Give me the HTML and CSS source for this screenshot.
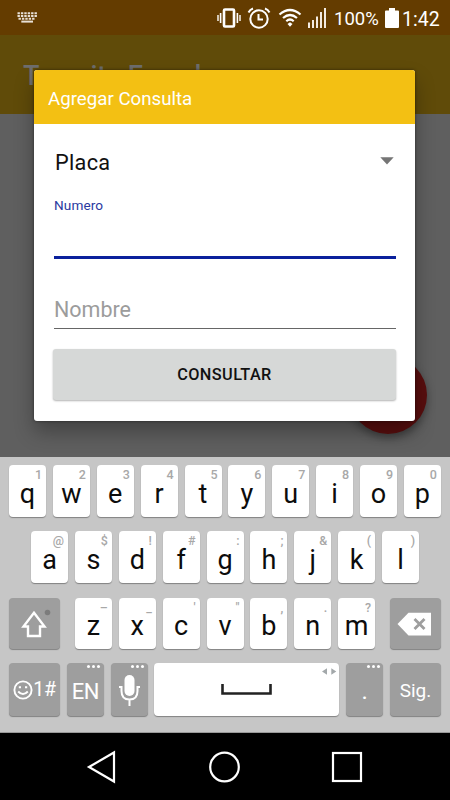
FILE: index.html
```
<!DOCTYPE html>
<html lang="es">
<head>
    <meta charset="UTF-8">
    <meta name="viewport" content="width=device-width, initial-scale=1.0">
    <title>Agregar Consulta</title>
    <link rel="stylesheet" href="styles.css">
</head>
<body>
    <div class="estado">
        <svg class="ico-teclado" width="20" height="12" viewBox="0 0 20 12">
            <path d="M0.5 1.2H20M0.5 4H20" stroke="#e8e0d6" stroke-width="2" stroke-dasharray="2.4 1"/>
            <path d="M1.5 6.8H18.5" stroke="#e8e0d6" stroke-width="2" stroke-dasharray="2.4 1"/>
            <path d="M4.3 9.6H16" stroke="#e8e0d6" stroke-width="2"/>
        </svg>
        <svg class="ico-vibrar" width="24" height="22" viewBox="0 0 24 22" fill="none" stroke="#fff">
            <rect x="7" y="2.5" width="10" height="17" rx="1" stroke-width="2.6"/>
            <path d="M3.6 6V16M20.4 6V16" stroke-width="1.6"/>
            <path d="M1 8V14M23 8V14" stroke-width="1.4"/>
        </svg>
        <svg class="ico-alarma" width="24" height="22" viewBox="0 0 24 22" fill="none" stroke="#fff" stroke-width="2">
            <circle cx="12" cy="12" r="8.7"/>
            <path d="M11.5 7V12.5H16"/>
            <path d="M1.5 5.5Q3 2.5 6 1.5M22.5 5.5Q21 2.5 18 1.5"/>
        </svg>
        <svg class="ico-wifi" width="24" height="20" viewBox="0 0 24 20" fill="none" stroke="#fff" stroke-width="2.2">
            <path d="M1.5 6.5Q12 -2.5 22.5 6.5M5 10Q12 4 19 10M8.3 13.2Q12 9.8 15.7 13.2"/>
            <path d="M12 14.2L14.5 16L12 18.8L9.5 16Z" fill="#fff" stroke="none"/>
        </svg>
        <svg class="ico-senal" width="19" height="20" viewBox="0 0 19 20" stroke="#f3ebe2" stroke-width="2">
            <path d="M1 14.5V20M5 12V20M9 8.5V20M13 4V20M17 0V20"/>
        </svg>
        <span class="porcentaje">100%</span>
        <svg class="ico-bateria" width="14" height="20" viewBox="0 0 14 20" fill="#fff">
            <path d="M4 0H10V2.5H13Q14 2.5 14 3.5V19Q14 20 13 20H1Q0 20 0 19V3.5Q0 2.5 1 2.5H4Z"/>
        </svg>
        <span class="hora">1:42</span>
    </div>

    <div class="pantalla">
        <div class="barra">Transito Ecuador</div>
        <div class="flotante"></div>

        <div class="dialogo">
            <div class="dialogo-titulo">Agregar Consulta</div>
            <div class="dialogo-cuerpo">
                <div class="selector">
                    <span>Placa</span>
                    <svg width="14" height="8" viewBox="0 0 14 8"><path d="M0.3 0.3H13.7L7 7.5Z" fill="#757575"/></svg>
                </div>
                <div class="campo activo"><span>Numero</span></div>
                <div class="campo vacio"><span>Nombre</span></div>
                <div class="boton">CONSULTAR</div>
            </div>
        </div>
    </div>

    <div class="teclado">
        <div class="fila">
            <div class="tecla">q<small>1</small></div>
            <div class="tecla">w<small>2</small></div>
            <div class="tecla">e<small>3</small></div>
            <div class="tecla">r<small>4</small></div>
            <div class="tecla">t<small>5</small></div>
            <div class="tecla">y<small>6</small></div>
            <div class="tecla">u<small>7</small></div>
            <div class="tecla">i<small>8</small></div>
            <div class="tecla">o<small>9</small></div>
            <div class="tecla">p<small>0</small></div>
        </div>
        <div class="fila fila-media">
            <div class="tecla">a<small>@</small></div>
            <div class="tecla">s<small>$</small></div>
            <div class="tecla">d<small>!</small></div>
            <div class="tecla">f<small>#</small></div>
            <div class="tecla">g<small>:</small></div>
            <div class="tecla">h<small>;</small></div>
            <div class="tecla">j<small>&amp;</small></div>
            <div class="tecla">k<small>(</small></div>
            <div class="tecla">l<small>)</small></div>
        </div>
        <div class="fila fila-tres">
            <div class="tecla gris ancha mayus">
                <svg width="51" height="52" viewBox="0 0 51 52">
                    <path d="M25 14.8L35.5 28.5H31V38H19V28.5H14.5Z" fill="none" stroke="#fff" stroke-width="2.4"/>
                    <circle cx="38.5" cy="14.5" r="2.8" fill="#7c7c7c"/>
                </svg>
            </div>
            <div class="tecla">z<small>–</small></div>
            <div class="tecla">x<small>_</small></div>
            <div class="tecla">c<small>'</small></div>
            <div class="tecla">v<small>"</small></div>
            <div class="tecla">b<small>,</small></div>
            <div class="tecla">n<small>.</small></div>
            <div class="tecla">m<small>?</small></div>
            <div class="tecla gris ancha borrar">
                <svg width="51" height="52" viewBox="0 0 51 52">
                    <path d="M7.5 26L18.5 14.8H41V37.5H18.5Z" fill="#fff"/>
                    <path d="M24.5 21L34.5 31M34.5 21L24.5 31" stroke="#9e9e9e" stroke-width="2.8"/>
                </svg>
            </div>
        </div>
        <div class="fila fila-baja">
            <div class="tecla gris ancha simbolos">
                <svg width="20" height="20" viewBox="0 0 20 20" fill="none" stroke="#fff" stroke-width="1.9">
                    <circle cx="10" cy="10" r="8.6"/>
                    <path d="M5.2 11.5Q10 16.5 14.8 11.5"/>
                    <path d="M5.8 7.2H8M12 7.2H14.2"/>
                </svg>
                <span>1#</span>
            </div>
            <div class="tecla gris idioma">EN<i class="puntos"></i></div>
            <div class="tecla gris">
                <svg width="37" height="53" viewBox="0 0 37 53">
                    <rect x="13.5" y="12" width="10" height="21" rx="5" fill="#fff"/>
                    <path d="M8 24H10.5V28Q10.5 36.5 18.5 36.5Q26.5 36.5 26.5 28V24H29M18.5 36.5V43" fill="none" stroke="#fff" stroke-width="2"/>
                </svg>
                <i class="puntos"></i>
            </div>
            <div class="tecla espacio">
                <svg width="185" height="53" viewBox="0 0 185 53">
                    <path d="M68.5 21V30.5H116.5V21" fill="none" stroke="#222" stroke-width="2.6"/>
                    <path d="M168 8.5L173 5.2V11.8ZM182.3 8.5L177.3 5.2V11.8Z" fill="#a3a8aa"/>
                </svg>
            </div>
            <div class="tecla gris punto">.<i class="puntos"></i></div>
            <div class="tecla gris ancha siguiente">Sig.</div>
        </div>
    </div>

    <div class="navegacion">
        <svg width="32" height="34" viewBox="0 0 32 34"><path d="M3 17L28 2.5V31.5Z"/></svg>
        <svg width="32" height="34" viewBox="0 0 32 34"><circle cx="15.5" cy="17" r="14.3"/></svg>
        <svg width="32" height="34" viewBox="0 0 32 34"><rect x="2" y="3" width="28" height="28"/></svg>
    </div>
</body>
</html>
```
FILE: styles.css
```
* {
    box-sizing: border-box;
}
body {
    margin: 0;
    width: 450px;
    height: 800px;
    display: flex;
    flex-direction: column;
    overflow: hidden;
    font-family: Roboto, sans-serif;
    background: #000;
}
svg {
    display: block;
    flex: none;
}

/* Barra de estado */
.estado {
    height: 35px;
    display: flex;
    align-items: center;
    padding-left: 17px;
    background: #643c00;
    color: #fff;
    white-space: nowrap;
}
.ico-teclado {
    margin-right: 180px;
}
.ico-vibrar {
    margin-right: 6px;
}
.ico-alarma {
    margin-right: 7px;
}
.ico-wifi {
    margin-right: 6px;
}
.ico-senal {
    margin-right: 7px;
}
.porcentaje {
    width: 45px;
    font-size: 18.5px;
    margin-right: 6px;
    padding-top: 3px;
}
.ico-bateria {
    margin-right: 3px;
}
.hora {
    font-size: 19.5px;
    padding-top: 3px;
}

/* Pantalla oscurecida detras del dialogo */
.pantalla {
    position: relative;
    height: 422px;
    flex: none;
    overflow: hidden;
    background: #5f5f5f;
}
.barra {
    height: 79px;
    padding-left: 23px;
    background: #604b09;
    color: #6e6e6e;
    font-size: 27px;
    font-weight: 500;
    letter-spacing: -0.1px;
    line-height: 82px;
}
.flotante {
    position: absolute;
    left: 349px;
    top: 321px;
    width: 78px;
    height: 78px;
    border-radius: 50%;
    background: #580e0e;
    box-shadow: 0 4px 8px rgba(0, 0, 0, 0.35);
}

.dialogo {
    position: absolute;
    left: 34px;
    top: 35px;
    width: 381px;
    height: 351px;
    border-radius: 3px;
    background: #fff;
    box-shadow: 0 11px 20px rgba(0, 0, 0, 0.3), 0 0 3px rgba(0, 0, 0, 0.5);
}
.dialogo-titulo {
    height: 54px;
    padding: 1px 14px 0;
    border-radius: 3px 3px 0 0;
    background: #f3c013;
    color: #fff;
    font-size: 18.7px;
    line-height: 56px;
}
.dialogo-cuerpo {
    padding: 0 19px 0 20px;
}
.selector {
    height: 74px;
    display: flex;
    align-items: center;
    justify-content: space-between;
    padding: 3px 2px 0 1px;
    font-size: 21.7px;
    letter-spacing: 0.3px;
    color: #111;
}
.selector svg {
    margin-top: -3px;
}
.campo.activo {
    height: 61px;
    border-bottom: 3px solid #0a209c;
    color: #2a3a9f;
    font-size: 13.6px;
    letter-spacing: 0.1px;
    line-height: 14px;
}
.campo.vacio {
    height: 70px;
    border-bottom: 1px solid #666;
    color: #9c9c9c;
    font-size: 21.5px;
    line-height: 26px;
    padding-top: 38px;
}
.boton {
    height: 51px;
    margin: 20px 0 0 -1px;
    border-radius: 3px;
    background: #d6d8d7;
    box-shadow: 0 1px 2px rgba(0, 0, 0, 0.3);
    color: #111;
    font-size: 16.3px;
    font-weight: 500;
    letter-spacing: 0.4px;
    line-height: 51px;
    text-align: center;
}

/* Teclado */
.teclado {
    height: 276px;
    flex: none;
    display: flex;
    flex-direction: column;
    gap: 14px;
    padding: 8px 9px 0;
    background: #c6c6c6;
    border-bottom: 1px solid #999;
}
.fila {
    display: flex;
    justify-content: space-between;
}
.fila-media {
    padding: 0 22px;
}
.fila-tres {
    margin-top: 1px;
}
.tecla {
    position: relative;
    width: 37px;
    height: 52px;
    display: flex;
    align-items: center;
    justify-content: center;
    padding-top: 6px;
    border-radius: 4px;
    background: #fff;
    box-shadow: 0 1px 1px rgba(0, 0, 0, 0.35);
    color: #0c0c0c;
    font-size: 27px;
}
.fila-tres .tecla {
    height: 51px;
    padding-top: 5px;
}
.tecla small {
    position: absolute;
    top: 3px;
    right: 4px;
    color: #a8a8a8;
    font-size: 12.5px;
    font-weight: 500;
    line-height: 14px;
}
.tecla.gris {
    background: #9e9e9e;
    color: #fff;
}
.ancha {
    width: 51px;
}
.mayus {
    margin-right: 8px;
}
.borrar {
    margin-left: 8px;
}
.fila-tres .gris,
.fila-baja .tecla {
    padding-top: 0;
}
.fila-baja .tecla {
    height: 53px;
}
.simbolos span {
    font-size: 19.5px;
    letter-spacing: -0.3px;
}
.fila-baja .idioma {
    font-size: 22px;
    letter-spacing: -0.5px;
    padding-top: 3px;
}
.espacio {
    width: 185px;
}
.fila-baja .punto {
    font-size: 24px;
    padding-top: 3px;
}
.fila-baja .siguiente {
    font-size: 19px;
    padding-top: 2px;
}
.puntos {
    position: absolute;
    top: 2px;
    right: 8.5px;
    width: 3px;
    height: 3px;
    border-radius: 50%;
    background: #fff;
    box-shadow: -5px 0 #fff, 5px 0 #fff;
}

/* Botones de navegacion */
.navegacion {
    height: 67px;
    flex: none;
    display: flex;
    align-items: center;
    justify-content: space-between;
    padding: 0 87px 0 86px;
    background: #000;
}
.navegacion svg {
    fill: none;
    stroke: #fff;
    stroke-width: 2.2;
}
```
